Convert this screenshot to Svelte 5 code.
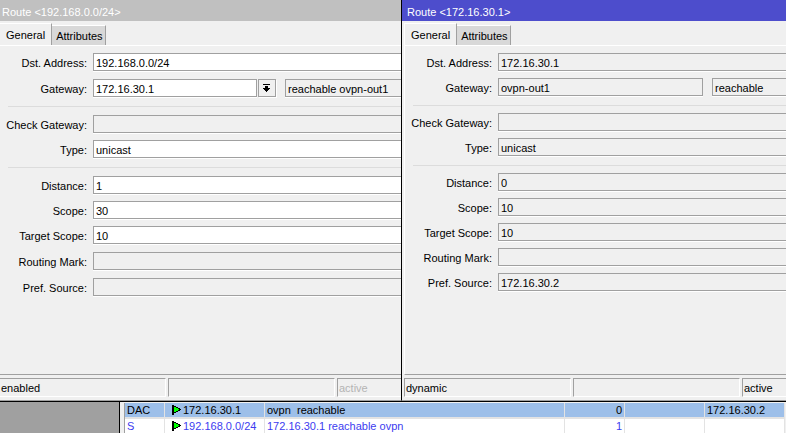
<script lang="ts">
  interface Field {
    name: string;
    value: string;
    locked?: boolean;
    roomy?: boolean;
    rule?: boolean;
    picker?: boolean;
    state?: string;
  }

  interface RouteWindow {
    id: string;
    title: string;
    focused: boolean;
    fields: Field[];
    status: string[];
  }

  const windows: RouteWindow[] = [
    {
      id: 'net',
      title: 'Route <192.168.0.0/24>',
      focused: false,
      fields: [
        { name: 'Dst. Address', value: '192.168.0.0/24' },
        { name: 'Gateway', value: '172.16.30.1', roomy: true, picker: true, state: 'reachable ovpn-out1' },
        { name: 'Check Gateway', value: '', locked: true, rule: true, roomy: true },
        { name: 'Type', value: 'unicast' },
        { name: 'Distance', value: '1', rule: true, roomy: true },
        { name: 'Scope', value: '30' },
        { name: 'Target Scope', value: '10' },
        { name: 'Routing Mark', value: '', locked: true, roomy: true },
        { name: 'Pref. Source', value: '', locked: true, roomy: true },
      ],
      status: ['enabled', '', 'active'],
    },
    {
      id: 'host',
      title: 'Route <172.16.30.1>',
      focused: true,
      fields: [
        { name: 'Dst. Address', value: '172.16.30.1', locked: true },
        { name: 'Gateway', value: 'ovpn-out1', locked: true, state: 'reachable' },
        { name: 'Check Gateway', value: '', locked: true, rule: true },
        { name: 'Type', value: 'unicast', locked: true },
        { name: 'Distance', value: '0', locked: true, rule: true },
        { name: 'Scope', value: '10', locked: true },
        { name: 'Target Scope', value: '10', locked: true },
        { name: 'Routing Mark', value: '', locked: true },
        { name: 'Pref. Source', value: '172.16.30.2', locked: true },
      ],
      status: ['dynamic', '', 'active'],
    },
  ];

  const routes = [
    { flags: 'DAC', dst: '172.16.30.1', gateway: 'ovpn  reachable', distance: 0, mark: '', source: '172.16.30.2' },
    { flags: 'S', dst: '192.168.0.0/24', gateway: '172.16.30.1 reachable ovpn', distance: 1, mark: '', source: '' },
  ];

  const tabs = ['General', 'Attributes'];

  let selected = $state(0);
</script>

<div class="windows">
  {#each windows as win}
    <section class="window" class:focused={win.focused}>
      <header class="title">{win.title}</header>
      <div class="body">
        <div class="tabs" role="tablist">
          {#each tabs as tab, i}
            <button class="tab" class:active={i === 0} role="tab" aria-selected={i === 0}>{tab}</button>
          {/each}
        </div>
        <div class="pane">
          {#each win.fields as field, i}
            {#if field.rule}
              <hr />
            {/if}
            <div class="row" class:roomy={field.roomy}>
              <label for="{win.id}-{i}">{field.name}:</label>
              <input id="{win.id}-{i}" class:boxed={field.state} type="text" value={field.value} readonly={field.locked} />
              {#if field.picker}
                <button class="picker" aria-label="Choose gateway">
                  <svg width="8" height="9" viewBox="0 0 8 9" shape-rendering="crispEdges">
                    <path d="M0 0h7v1H0zM2 2h3v2h2v1H6v1H5v1H4v1H3V7H2V6H1V5H0V4h2z" />
                  </svg>
                </button>
              {/if}
              {#if field.state}
                <input class="state" type="text" value={field.state} readonly aria-label="Gateway state" />
              {/if}
            </div>
          {/each}
        </div>
      </div>
      <footer class="status">
        {#each win.status as text, i}
          <div class="cell" class:dim={!win.focused && i === 2}>{text}</div>
        {/each}
      </footer>
    </section>
  {/each}
</div>

<div class="desktop">
  <div class="list">
    <table>
      <colgroup>
        <col class="c-flags" />
        <col class="c-dst" />
        <col />
        <col class="c-distance" />
        <col class="c-mark" />
        <col class="c-source" />
      </colgroup>
      <tbody>
        {#each routes as route, i}
          <tr class:selected={i === selected} onclick={() => (selected = i)}>
            <td>{route.flags}</td>
            <td class="dst">
              <svg width="9" height="10" viewBox="0 0 9 10" shape-rendering="crispEdges">
                <path d="M0 0h2v10H0z" />
                <path d="M2 1h2v1h2v1h2v1h1v1H8v1H6v1H4v1H2z" />
                <path class="green" d="M2 2h2v1h2v1h1v1H6v1H4v1H2z" />
              </svg>
              {route.dst}
            </td>
            <td>{route.gateway}</td>
            <td class="num">{route.distance}</td>
            <td>{route.mark}</td>
            <td>{route.source}</td>
          </tr>
        {/each}
      </tbody>
    </table>
  </div>
</div>

<style>
  :global(body) {
    background: #a0a0a0;
    font: 11px/14px 'Liberation Sans', Arial, sans-serif;
    color: #000;
  }

  input,
  button {
    font: inherit;
    color: inherit;
    box-sizing: border-box;
    border-radius: 0;
    margin: 0;
  }

  .windows {
    display: grid;
    grid-template-columns: 401fr 385fr;
    border-bottom: 1px solid #000;
  }

  .window {
    display: flex;
    flex-direction: column;
    min-width: 0;
    overflow: hidden;
    background: #f0f0f0;
    border-bottom: 1px solid #a0a0a0;
  }

  .window.focused {
    border-left: 1px solid #000;
  }

  .title {
    padding: 5px 2px 2px;
    background: #c0c0c0;
    color: #fff;
  }

  .focused .title {
    padding-left: 5px;
    background: #4d4dcc;
  }

  .body {
    flex: 1;
    margin-top: 2px;
    border-bottom: 1px solid #a0a0a0;
  }

  .focused .body {
    margin-left: 2px;
    border-left: 1px solid #fff;
  }

  .tabs {
    display: flex;
    align-items: flex-end;
    height: 22px;
    border-bottom: 1px solid #fff;
  }

  .tab {
    height: 20px;
    padding: 0 2px 0 4px;
    border: 0;
    border-top: 1px solid #fff;
    border-right: 1px solid #a0a0a0;
    background: #d8d8d8;
  }

  .tab.active {
    height: 22px;
    padding: 0 6px;
    background: #f0f0f0;
  }

  .pane {
    padding: 0 0 78px 8px;
  }

  .row {
    display: flex;
    margin-top: 7px;
  }

  .row.roomy {
    margin-top: 8px;
  }

  label {
    flex: none;
    display: flex;
    justify-content: flex-end;
    width: 79px;
    margin-right: 6px;
    line-height: 20px;
    height: 18px;
    white-space: nowrap;
  }

  input {
    flex: 1;
    min-width: 0;
    height: 18px;
    padding: 1px 0 0 2px;
    border: 1px solid #a0a0a0;
    border-right: 0;
    background: #fff;
    box-shadow: 0 1px #fff;
    outline: 0;
  }

  input:read-only {
    background: #f0f0f0;
  }

  input.boxed {
    border-right: 1px solid #a0a0a0;
  }

  .picker {
    flex: none;
    display: flex;
    align-items: center;
    justify-content: center;
    width: 18px;
    height: 18px;
    margin-left: 1px;
    padding: 0;
    border: 1px solid #a0a0a0;
    background: #f0f0f0;
    box-shadow: 1px 1px #fff;
  }

  .state {
    flex: none;
    width: 116px;
    margin-left: 9px;
  }

  .focused .state {
    width: 74px;
  }

  hr {
    height: 1px;
    margin: 9px 0 0;
    border: 0;
    background: #dcdcdc;
  }

  .status {
    display: flex;
    gap: 2px;
    padding: 3px 0;
  }

  .focused .status {
    padding-left: 2px;
  }

  .cell {
    flex: none;
    box-sizing: border-box;
    width: 167px;
    height: 19px;
    padding: 2px 1px;
    border: 1px solid;
    border-color: #a0a0a0 #fff #fff #a0a0a0;
  }

  /* the unfocused window starts past the left edge of the desktop */
  .window:not(.focused) .cell:first-child {
    width: 166px;
    border-left: 0;
  }

  .cell.dim {
    color: #b4b4b4;
  }

  .desktop {
    padding-left: 119px;
  }

  .list {
    overflow: hidden;
    border-left: 1px solid #000;
    background: #f0f0f0;
    padding: 1px 1px 0 4px;
  }

  table {
    width: 100%;
    border-collapse: separate;
    border-spacing: 0;
    table-layout: fixed;
    border-left: 1px solid #a0a0a0;
    background: #fff;
  }

  .c-flags {
    width: 40px;
  }

  .c-dst {
    width: 100px;
  }

  .c-distance {
    width: 60px;
  }

  .c-mark,
  .c-source {
    width: 80px;
  }

  td {
    height: 14px;
    padding: 0 2px;
    border-right: 1px solid #e3e3e3;
    border-bottom: 1px solid #e3e3e3;
    color: #3c3cf0;
    line-height: 14px;
    white-space: pre;
  }

  .selected td {
    border-bottom-width: 2px;
    background: #9dbfe9;
    color: #000;
  }

  .dst {
    display: flex;
    align-items: center;
    gap: 2px;
    padding-left: 7px;
    white-space: normal;
  }

  .num {
    text-align: right;
  }

  .green {
    fill: #0f0;
  }
</style>
